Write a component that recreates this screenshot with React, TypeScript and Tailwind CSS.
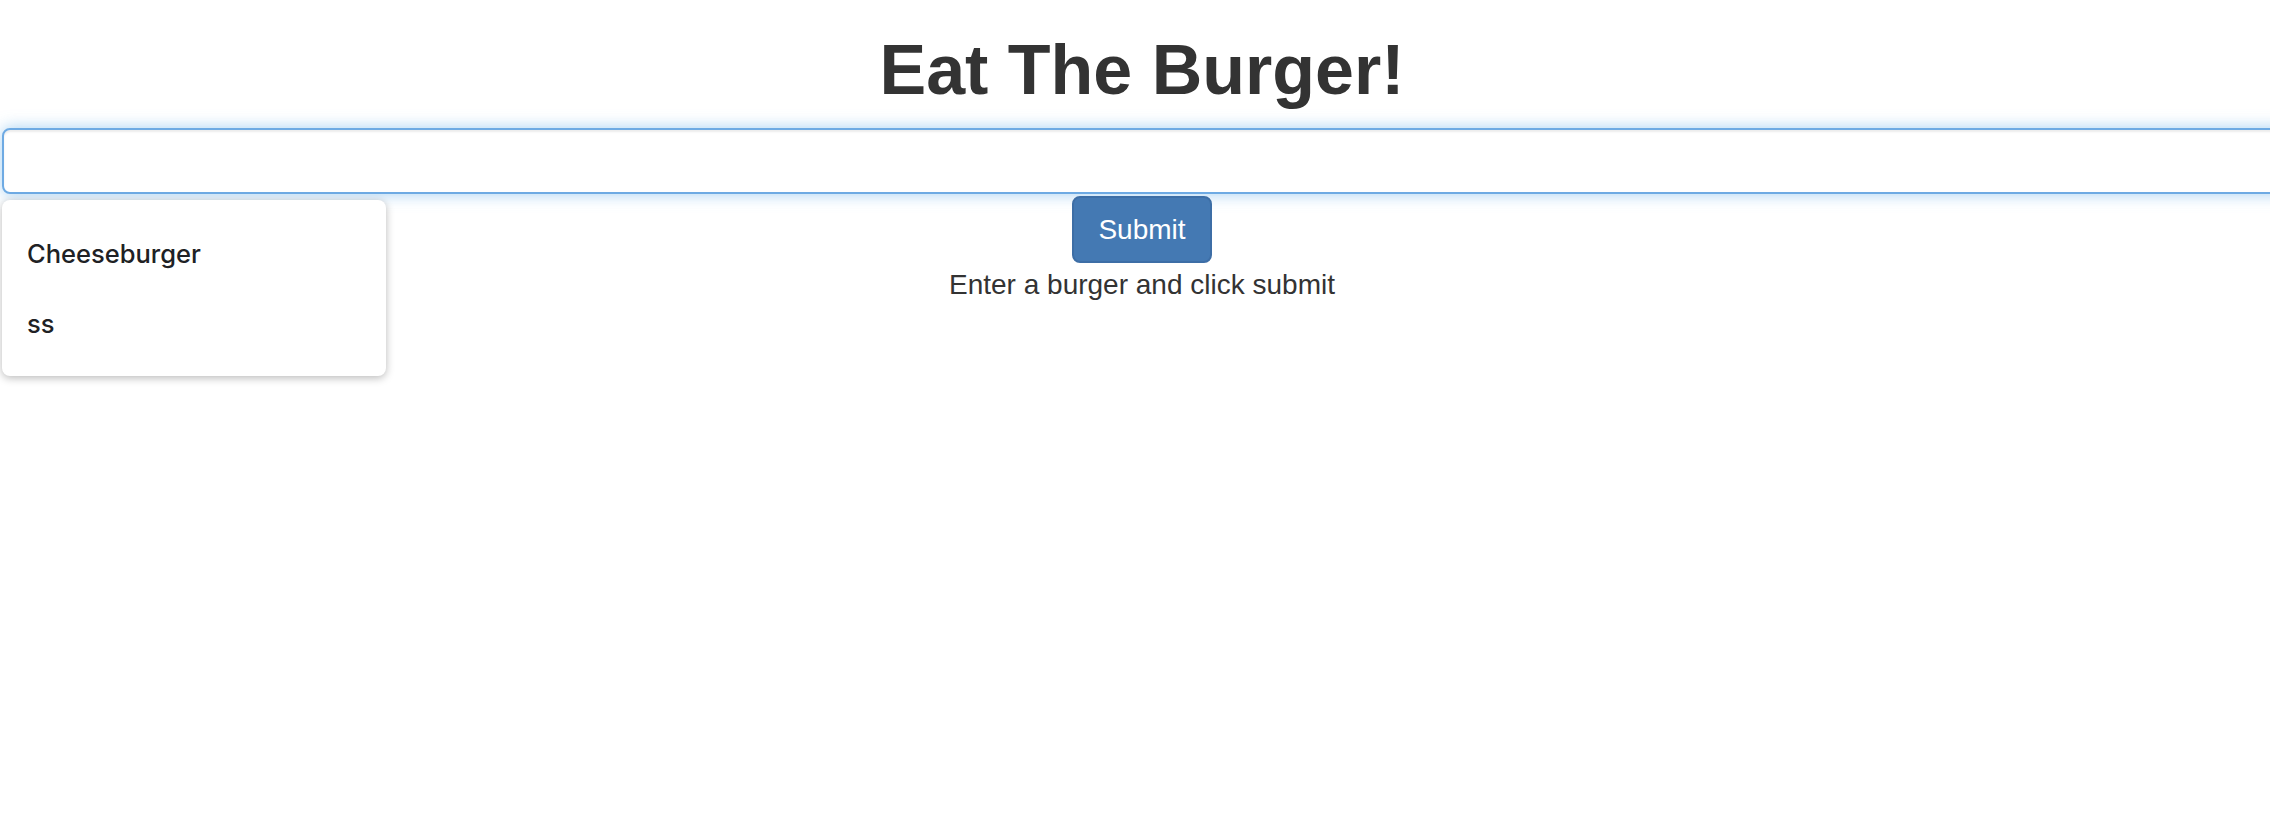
import React from "react";

export default function App() {
  return (
    <div className="relative w-[2270px] h-[838px] overflow-hidden bg-white">
      <div
        className="w-[2284px] flex flex-col items-center pt-[31px]"
        style={{ fontFamily: '"Liberation Sans", Arial, sans-serif' }}
      >
        <h1 className="h-[79px] leading-[79px] text-[70px] font-bold text-[#333333] whitespace-nowrap">
          Eat The Burger!
        </h1>
        <input
          type="text"
          className="self-start ml-[2px] mt-[18px] w-[2330px] h-[66px] rounded-[8px] border-2 border-[#6eaae3] bg-white outline-none px-[24px] text-[28px] text-[#555] shadow-[inset_0_2px_2px_rgba(0,0,0,0.075),0_0_16px_rgba(102,175,233,0.6)]"
        />
        <button className="mt-[2px] h-[67px] px-[24px] rounded-[8px] border-2 border-[#3d6ea6] bg-[#4479b3] text-white text-[28px] leading-[40px]">
          Submit
        </button>
        <p className="mt-[2px] h-[40px] leading-[40px] text-[28px] text-[#333333] whitespace-nowrap">
          Enter a burger and click submit
        </p>
      </div>

      <div
        className="absolute left-[2px] top-[200px] w-[384px] h-[176px] rounded-[8px] bg-white pt-[19px] pb-[17px] shadow-[0_2px_8px_rgba(0,0,0,0.28)]"
        style={{ fontFamily: 'Inter, "Noto Sans", sans-serif' }}
      >
        <div className="h-[70px] leading-[70px] pl-[25px] text-[25.5px] font-medium text-[#202124]">
          Cheeseburger
        </div>
        <div className="h-[70px] leading-[70px] pl-[25px] text-[25.5px] font-medium text-[#202124]">
          ss
        </div>
      </div>
    </div>
  );
}
